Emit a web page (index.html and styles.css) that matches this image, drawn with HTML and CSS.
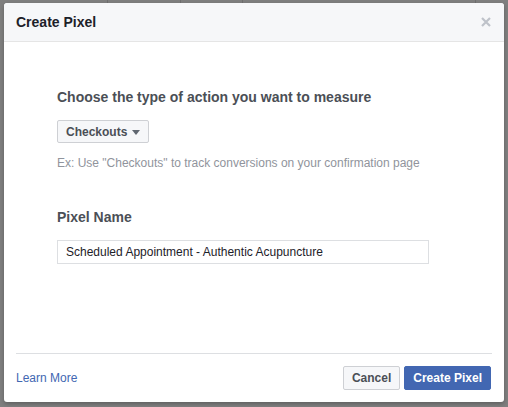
FILE: index.html
```html
<!DOCTYPE html>
<html>
<head>
<meta charset="utf-8">
<link rel="stylesheet" href="styles.css">
</head>
<body>
<div class="dialog">
  <div class="header">
    <div class="title">Create Pixel</div>
    <svg class="close" width="10" height="10" viewBox="0 0 10 10"><path d="M1 1L9 9M9 1L1 9" stroke="#bec2c9" stroke-width="2.2" fill="none"/></svg>
  </div>
  <div class="content">
    <div class="heading">Choose the type of action you want to measure</div>
    <button class="select">Checkouts <span class="caret"></span></button>
    <div class="hint">Ex: Use "Checkouts" to track conversions on your confirmation page</div>
    <div class="heading name-label">Pixel Name</div>
    <div class="input">Scheduled Appointment - Authentic Acupuncture</div>
  </div>
  <div class="footer">
    <a class="learn">Learn More</a>
    <div class="actions">
      <button class="btn">Cancel</button>
      <button class="btn primary">Create Pixel</button>
    </div>
  </div>
</div>
</body>
</html>
```
FILE: styles.css
```css
html, body {
  margin: 0;
  padding: 0;
}
body {
  width: 508px;
  height: 407px;
  overflow: hidden;
  background-color: #7f7f7f;
  background-image:
    linear-gradient(to right, transparent 107px, #6f6f6f 107px, #6f6f6f 108px, transparent 108px),
    linear-gradient(to right, transparent 180px, #6f6f6f 180px, #6f6f6f 181px, transparent 181px),
    linear-gradient(to right, transparent 242px, #6f6f6f 242px, #6f6f6f 243px, transparent 243px),
    linear-gradient(to right, transparent 475px, #6f6f6f 475px, #6f6f6f 476px, transparent 476px);
  background-size: 508px 3px;
  background-repeat: no-repeat;
  font-family: "Liberation Sans", Arial, sans-serif;
  padding-top: 3px;
  box-sizing: border-box;
}
.dialog {
  margin-left: 4px;
  width: 500px;
  height: 399px;
  background: #fff;
  border-radius: 3px;
  box-shadow: 0 2px 4px rgba(0,0,0,0.25);
  display: flex;
  flex-direction: column;
  overflow: hidden;
}
.header {
  height: 38px;
  background: #f6f7f9;
  border-bottom: 1px solid #e5e5e5;
  display: flex;
  align-items: center;
  justify-content: space-between;
  padding: 0 13px 0 12px;
  border-radius: 3px 3px 0 0;
}
.title {
  font-size: 14px;
  font-weight: bold;
  color: #1d2129;
  line-height: 18px;
}
.close {
  display: block;
}
.content {
  padding: 46px 0 0 53px;
  flex: 1;
}
.heading {
  font-size: 14px;
  font-weight: bold;
  color: #4b4f56;
  line-height: 18px;
}
.select {
  margin-top: 14px;
  height: 23px;
  padding: 0 8px;
  border: 1px solid #ced0d4;
  border-radius: 2px;
  background: #f6f7f9;
  font-family: inherit;
  font-size: 12px;
  font-weight: bold;
  color: #4b4f56;
  display: flex;
  align-items: center;
  gap: 5px;
}
.caret {
  width: 0;
  height: 0;
  border-left: 4.5px solid transparent;
  border-right: 4.5px solid transparent;
  border-top: 5px solid #606770;
  margin-top: 1px;
}
.hint {
  margin-top: 12px;
  font-size: 12px;
  line-height: 16px;
  color: #90949c;
}
.name-label {
  margin-top: 37px;
}
.input {
  margin-top: 14px;
  height: 22px;
  border: 1px solid #dddfe2;
  box-sizing: content-box;
  padding: 0 8px;
  width: 354px;
  font-size: 12px;
  line-height: 22px;
  color: #1d2129;
}
.footer {
  margin: 0 12px;
  border-top: 1px solid #dddfe2;
  padding: 12px 0 12px;
  display: flex;
  align-items: center;
  justify-content: space-between;
}
.learn {
  font-size: 12px;
  color: #4267b2;
}
.actions {
  display: flex;
  gap: 4px;
  padding-right: 1px;
}
.btn {
  height: 24px;
  padding: 0 8px;
  border: 1px solid #ced0d4;
  border-radius: 2px;
  background: #f6f7f9;
  font-family: inherit;
  font-size: 12px;
  font-weight: bold;
  color: #4b4f56;
}
.btn.primary {
  background: #4267b2;
  border-color: #4267b2;
  color: #fff;
}
```
